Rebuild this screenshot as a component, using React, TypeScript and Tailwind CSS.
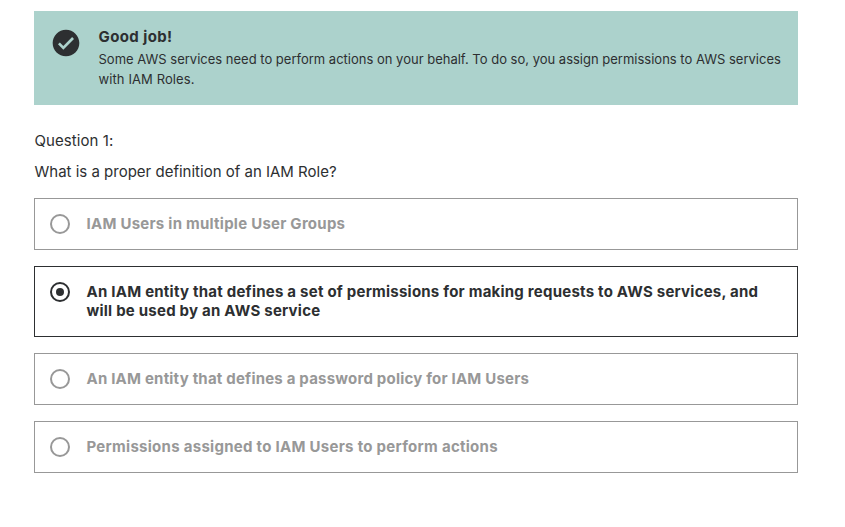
const options = [
  { text: 'IAM Users in multiple User Groups', selected: false, tracking: 'tracking-[0.25px]' },
  {
    text: 'An IAM entity that defines a set of permissions for making requests to AWS services, and will be used by an AWS service',
    selected: true,
    tracking: 'tracking-[0.23px]',
  },
  { text: 'An IAM entity that defines a password policy for IAM Users', selected: false, tracking: 'tracking-[0.205px]' },
  { text: 'Permissions assigned to IAM Users to perform actions', selected: false, tracking: 'tracking-[0.28px]' },
];

function SuccessIcon() {
  return (
    <svg viewBox="0 0 24 24" className="size-8 shrink-0" aria-hidden="true">
      <path
        fill="currentColor"
        d="M12 2C6.48 2 2 6.48 2 12s4.48 10 10 10 10-4.48 10-10S17.52 2 12 2zm-2 15l-4-4 1.41-1.41L10 14.17l6.59-6.59L18 9l-8 8z"
      />
    </svg>
  );
}

function Radio({ selected }: { selected: boolean }) {
  return (
    <span className="flex size-5 shrink-0 items-center justify-center rounded-full border-2 border-current">
      {selected && <span className="size-2 rounded-full bg-current" />}
    </span>
  );
}

function Option({ text, selected, tracking }: (typeof options)[number]) {
  return (
    <li
      className={`flex items-start gap-4 border px-[15px] py-[15px] ${
        selected ? 'h-[71px] border-[#2d2f31] text-[#2d2f31]' : 'h-[52px] border-[#989898] text-[#989898]'
      }`}
    >
      <Radio selected={selected} />
      <p className={`pl-[0.5px] text-[15px] leading-[19px] font-bold ${tracking}`}>{text}</p>
    </li>
  );
}

export default function App() {
  return (
    <main className="min-h-[527px] bg-white pt-[11px] pr-[47px] pl-[34px] font-['Inter','Liberation_Sans',sans-serif] text-[#2d2f31]">
      <section className="flex h-[94px] gap-4 bg-[#acd2cc] p-4">
        <SuccessIcon />
        <div className="pl-[0.5px]">
          <h2 className="text-[15px] leading-5 font-bold tracking-[0.4px]">Good job!</h2>
          <p className="pt-0.5 text-[13px] leading-5">
            Some AWS services need to perform actions on your behalf. To do so, you assign permissions to AWS services{' '}
            <span className="tracking-[0.1px]">with IAM Roles.</span>
          </p>
        </div>
      </section>
      <div className="mt-[26px] flex flex-col gap-[11px] pl-[0.5px] text-[15px] leading-5">
        <p className="tracking-[0.08px]">Question 1:</p>
        <p>What is a proper definition of an IAM Role?</p>
      </div>
      <ul className="mt-4 flex flex-col gap-4">
        {options.map((option) => (
          <Option key={option.text} {...option} />
        ))}
      </ul>
    </main>
  );
}
